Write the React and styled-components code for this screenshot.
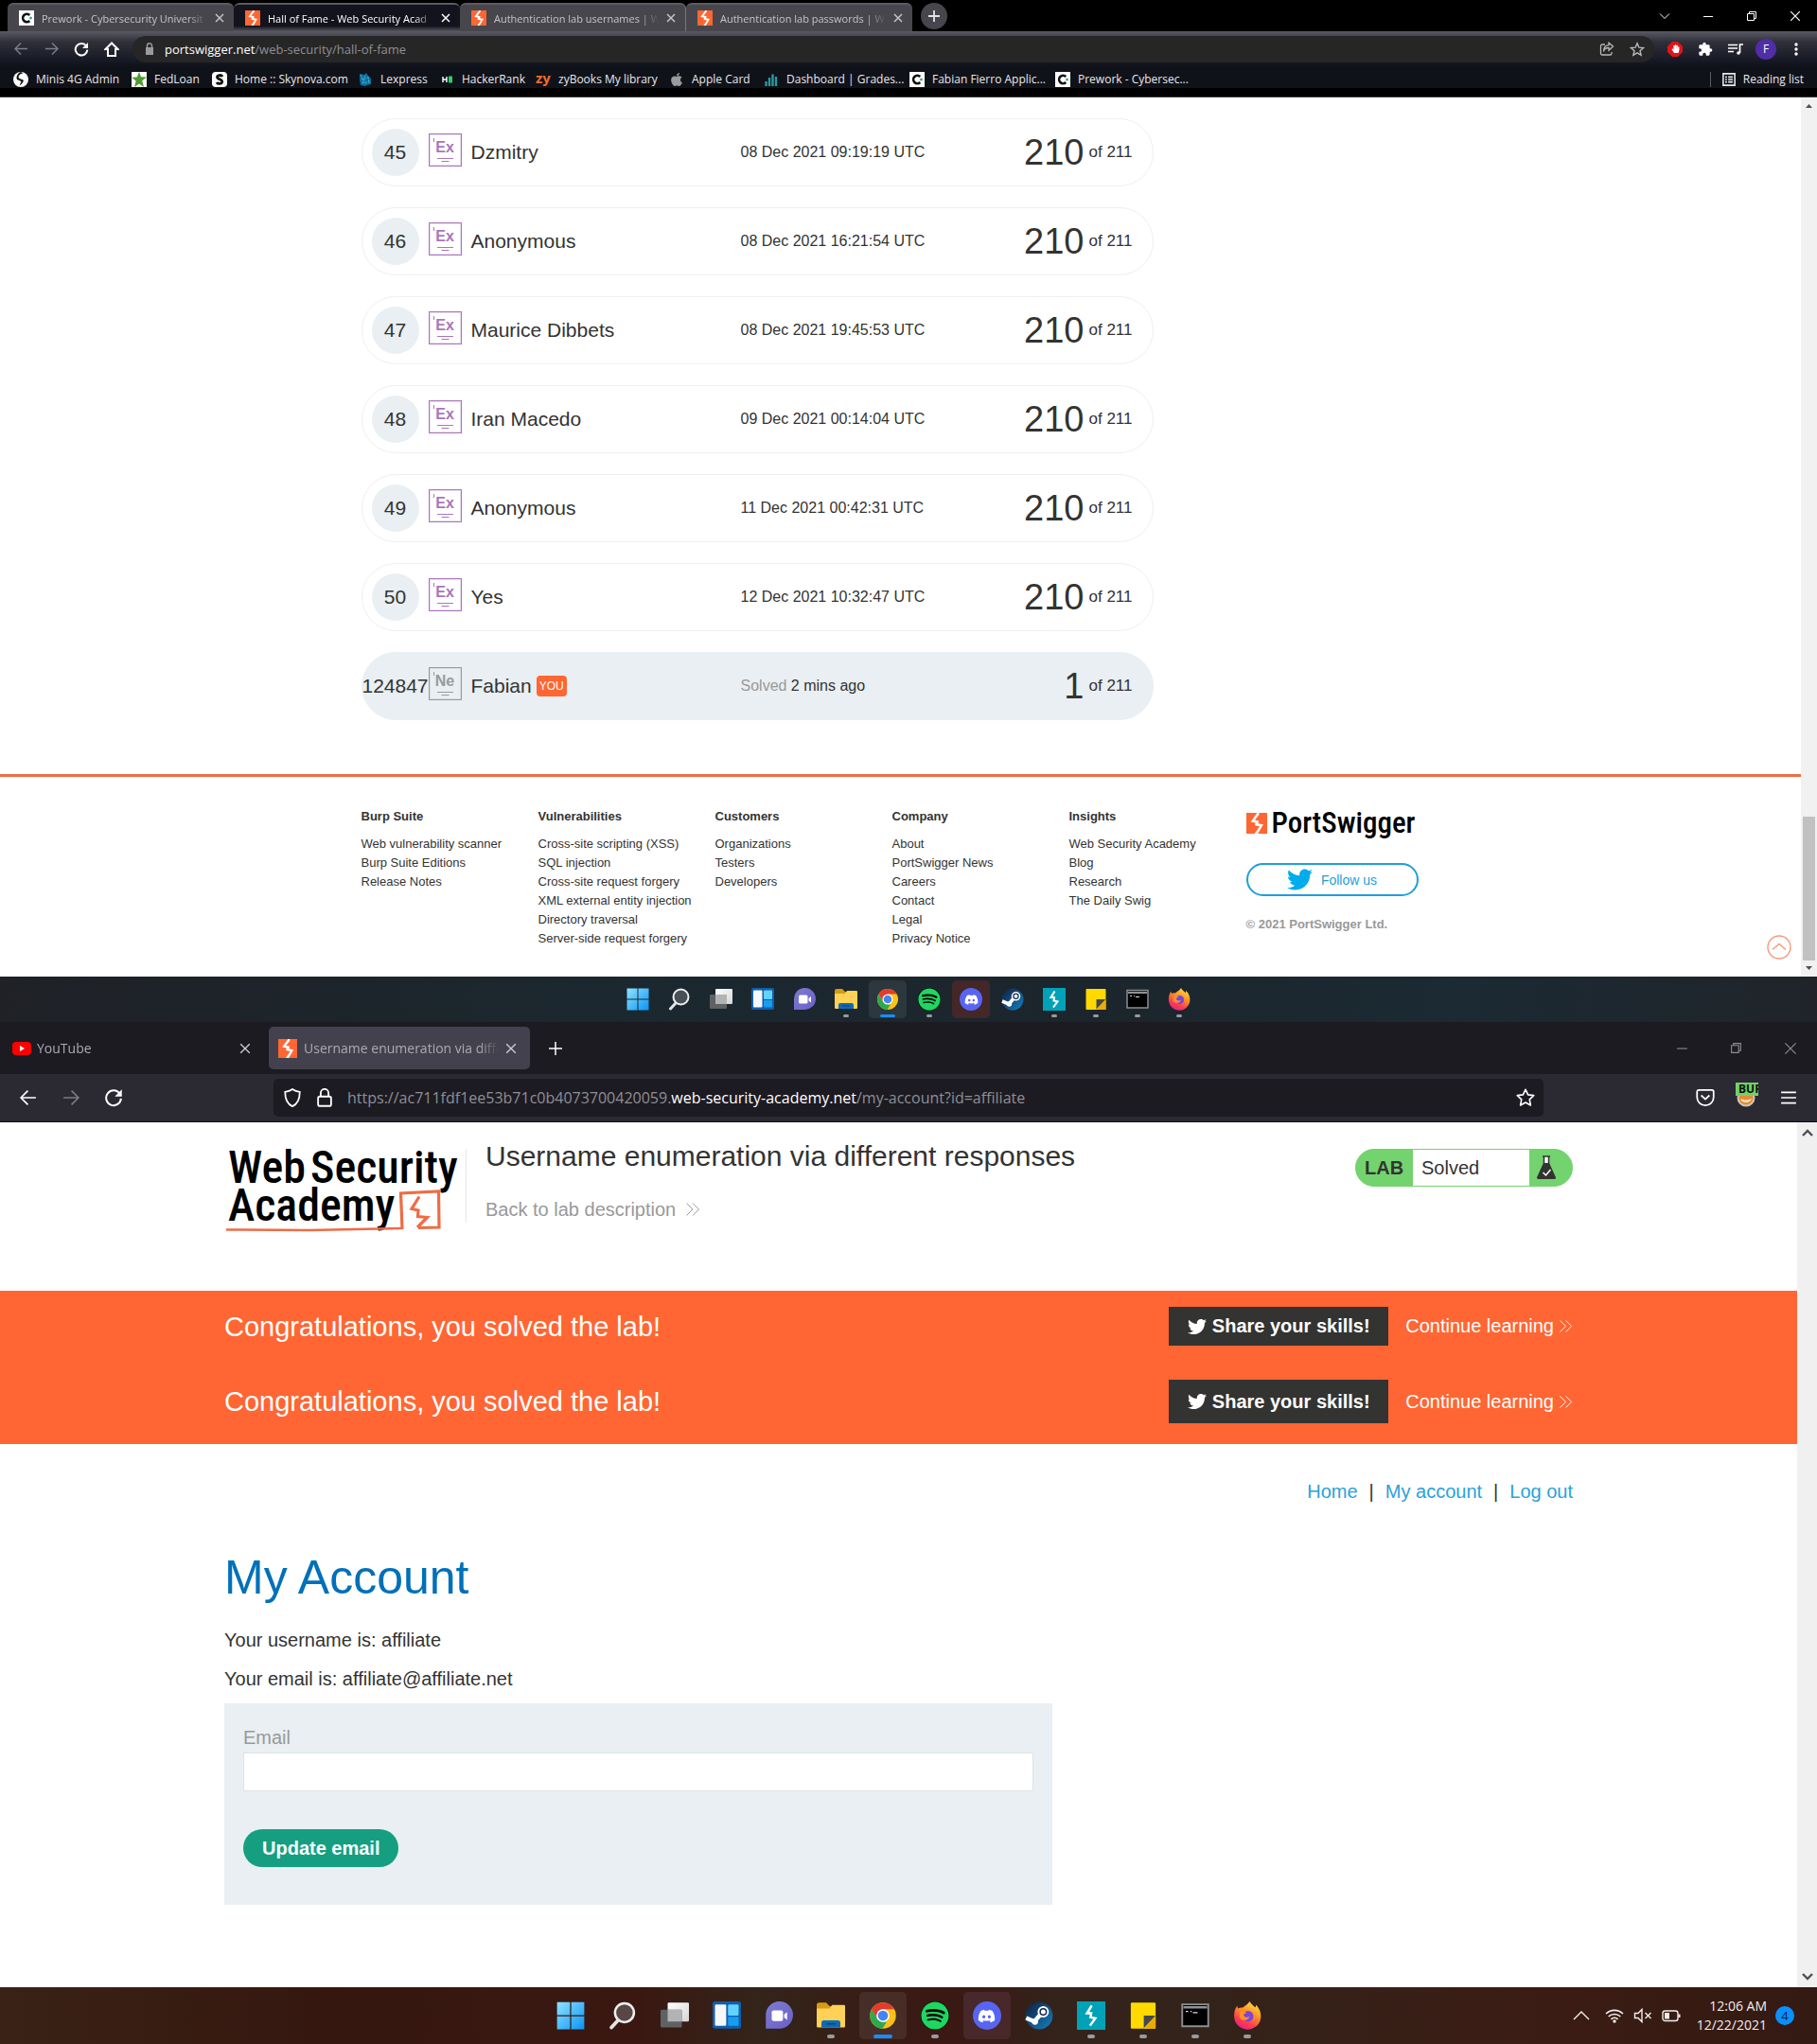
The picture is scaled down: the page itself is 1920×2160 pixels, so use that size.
import React from "react";
import styled, { createGlobalStyle, css } from "styled-components";
import { FaTwitter, FaApple, FaDiscord, FaSpotify, FaHandPaper, FaPuzzlePiece } from "react-icons/fa";

const UI = `"Segoe UI", "Open Sans", "Noto Sans", sans-serif`;
const SANS = `Arial, "Liberation Sans", sans-serif`;
const LOGO = `"Roboto Condensed", "Liberation Sans Narrow", Roboto, sans-serif`;

const Global = createGlobalStyle`
  *, *::before, *::after { box-sizing: border-box; }
  body { margin: 0; background: #fff; color: #333332; font-family: ${SANS}; }
  button, input { font: inherit; color: inherit; }
  button { background: none; border: 0; padding: 0; cursor: pointer; }
  a { color: inherit; text-decoration: none; }
  h1, h2, h3, p, ul, ol { margin: 0; padding: 0; }
  ul, ol { list-style: none; }
  svg { display: block; flex: none; }
`;

/* ---------- shared drawings ---------- */

const Stroke = ({ size = 16, w = 1, box = 16, children, ...rest }) => (
  <svg width={size} height={size} viewBox={`0 0 ${box} ${box}`} fill="none" stroke="currentColor" strokeWidth={w} aria-hidden="true" {...rest}>
    {children}
  </svg>
);

const Close = ({ size = 10, w = 1.5 }) => (
  <Stroke size={size} box={10} w={w}><path d="M1 1 9 9M9 1 1 9" /></Stroke>
);
const Minimise = ({ size = 12, w = 1 }) => (
  <Stroke size={size} box={12} w={w}><path d="M1 6.5H11" /></Stroke>
);
const Restore = ({ size = 12, w = 1 }) => (
  <Stroke size={size} box={12} w={w}><path d="M1.5 3.5h7v7h-7zM3.5 3.5v-2h7v7h-2" /></Stroke>
);
const Arrow = ({ size = 16, flip, w = 1.6 }) => (
  <Stroke size={size} w={w}>
    <path d={flip ? "M1 8H15M8.5 1.5 15 8l-6.5 6.5" : "M15 8H1M7.5 1.5 1 8l6.5 6.5"} />
  </Stroke>
);
const Reload = ({ size = 16, w = 2 }) => (
  <Stroke size={size} w={w}>
    <path d="M13.2 4.6A6.3 6.3 0 1 0 14.3 8.7" />
    <path d="M15 1v6H9z" fill="currentColor" stroke="none" />
  </Stroke>
);
const Chevrons = ({ size = 16 }) => (
  <Stroke size={size} w={1}><path d="M1.5 1.5 8 8l-6.5 6.5M8 1.5 14.5 8 8 14.5" /></Stroke>
);
const Bolt = ({ width = 16, height = 16, bg = "#ff6633" }) => (
  <svg width={width} height={height} viewBox="0 0 24 24" preserveAspectRatio="none" aria-hidden="true">
    <path fill={bg} d="M0 0h24v24H0z" />
    <path fill="#fff" d="M14.5 0 12.5 0 5 10.3l5.5 1.200L9.800 14.500 15.300 15.600 9.500 24h3.800L19.500 13.400 13.600 12.200 14.500 9.300 9.800 8.300 14.800 2z" />
  </svg>
);
const CyberC = () => (
  <svg width="16" height="16" viewBox="0 0 16 16" aria-hidden="true">
    <path fill="#fff" d="M0 0h16v16H0z" />
    <path d="M11.3 5A4.2 4.2 0 1 0 11.3 11" fill="none" stroke="#111" strokeWidth="2.6" />
    <circle cx="12.5" cy="8" r="1.5" fill="#3fae8c" />
  </svg>
);

/* ---------- Chrome window ---------- */

const ChromeFrame = styled.header`
  font-family: ${UI};
  background: #000;
  color: #e8e8ea;
  font-size: 12px;
  padding-bottom: 9px;
  border-bottom: 1px solid #3a3a3d;
`;
const ChromeStrip = styled.div`
  display: flex;
  align-items: flex-end;
  height: 33px;
  padding-left: 8px;
`;
const ChromeTab = styled.div`
  display: flex;
  align-items: center;
  gap: 8px;
  width: 239px;
  height: 30px;
  padding: 0 10px 0 12px;
  border-top: 2px solid #5c5b62;
  border-radius: 6px 6px 0 0;
  background: ${(p) => (p.$active ? "linear-gradient(#12131d 0 80%, #55555d)" : "#47464d")};
  color: ${(p) => (p.$active ? "#fff" : "#c4c4c8")};
  border-right: ${(p) => (p.$divider ? "1px solid #77767d" : "0")};
  font-size: 11px;
`;
const FadeText = styled.span`
  flex: 1;
  min-width: 0;
  overflow: hidden;
  white-space: nowrap;
  mask-image: linear-gradient(90deg, #000 calc(100% - 20px), transparent);
`;
const NewTab = styled.button`
  display: grid;
  place-items: center;
  width: 28px;
  height: 28px;
  margin: 0 0 2px 9px;
  border-radius: 50%;
  background: #47464d;
  color: #e4e4e6;
`;
const WindowButtons = styled.div`
  display: flex;
  align-items: center;
  gap: ${(p) => p.$gap}px;
  margin-left: auto;
  padding-right: ${(p) => p.$right}px;
  color: ${(p) => p.$color};
  align-self: center;
`;
const ChromeBar = styled.div`
  display: flex;
  align-items: center;
  height: 37px;
  padding: 0 14px;
  background: linear-gradient(#5a5a64, #30303a 30%, #161824 85%, #10121a);
`;
const ToolRow = styled.div`
  display: flex;
  align-items: center;
  gap: ${(p) => p.$gap}px;
`;
const IconButton = styled.button`
  display: grid;
  place-items: center;
  width: ${(p) => p.$size || 16}px;
  height: ${(p) => p.$size || 16}px;
  color: ${(p) => p.$color || "#fff"};
`;
const Omnibox = styled.div`
  display: flex;
  align-items: center;
  flex: 1;
  gap: 8px;
  height: 28px;
  margin: 0 14px;
  padding: 0 10px;
  border-radius: 14px;
  background: #262626;
  color: #b9b9b9;
`;
const Address = styled.span`
  flex: 1;
  white-space: nowrap;
  overflow: hidden;
  outline: 0;
  font-size: ${(p) => p.$size}px;
  color: #8f8f94;
  b { font-weight: 400; color: #fff; }
`;
const Avatar = styled.button`
  width: 22px;
  height: 22px;
  margin: 0 -3px;
  border-radius: 50%;
  background: #512da8;
  color: #fff;
  font-size: 12px;
`;
const Bookmarks = styled.nav`
  display: flex;
  align-items: center;
  height: 23px;
  padding: 4px 14px 0;
  background: #10121a;
`;
const Bookmark = styled.a`
  display: flex;
  align-items: center;
  flex: none;
  gap: 8px;
  width: ${(p) => p.$width}px;
  white-space: nowrap;
`;
const ReadingList = styled.button`
  display: flex;
  align-items: center;
  gap: 8px;
  height: 16px;
  margin-left: auto;
  padding-left: 12px;
  border-left: 1px solid #5c5c62;
`;

const chromeTabs = [
  { title: "Prework - Cybersecurity Universit", icon: <CyberC /> },
  { title: "Hall of Fame - Web Security Acad", icon: <Bolt />, active: true },
  { title: "Authentication lab usernames | W", icon: <Bolt />, divider: true },
  { title: "Authentication lab passwords | W", icon: <Bolt /> },
];

const Disc = ({ glyph, round }) => (
  <svg width="16" height="16" viewBox="0 0 16 16" aria-hidden="true">
    <rect width="16" height="16" rx={round} fill="#fff" />
    {glyph}
  </svg>
);
const SGlyph = ({ w = 2.4 }) => (
  <path d="M11 5C10 3 6 3 5.5 5.2 5.2 8 11 7.5 10.7 10.5 10.3 13 6 13 5 11" fill="none" stroke="#111" strokeWidth={w} />
);

const ZyMark = styled.span`
  width: 16px;
  height: 20px;
  font-size: 15px;
  line-height: 16px;
  font-weight: 700;
  color: #f26a2a;
`;

const bookmarks = [
  { label: "Minis 4G Admin", width: 125, icon: <Disc round={8} glyph={<path d="M10.500 1.500C6 2 4.500 5 6.500 7l4 1.500c1 1.500-1 4-4 6l2-4.500L4 8C2.500 5 5 1 8 0z" fill="#111" />} /> },
  { label: "FedLoan", width: 85, icon: <Disc round={0} glyph={<path d="m8 0 2 5.3 6 .2-4.8 3.700L13 16l-5-3.500L3 16l1.600-6.500L0 5.800l5.800-.3z" fill="#4f9a32" />} /> },
  { label: "Home :: Skynova.com", width: 154, icon: <Disc round={4} glyph={<SGlyph w={2.8} />} /> },
  { label: "Lexpress", width: 86, icon: (
    <svg width="16" height="16" viewBox="0 0 16 16" aria-hidden="true">
      <path d="M2 2 7 3 9 1l2 3 3 3v6l-4 1-2 1-5-1-1-5z" fill="#116c96" />
      <path d="M3 3l6 10M4 8l8-2M5 12l8-2M8 4l-3 8M11 5l1 7" stroke="#2fb0dd" fill="none" strokeDasharray="2 1" />
    </svg>) },
  { label: "HackerRank", width: 102, icon: (
    <svg width="16" height="16" viewBox="0 0 16 16" aria-hidden="true">
      <path d="M4 5v6M8 5v6M4 8h4" stroke="#fff" strokeWidth="1.4" /><path d="M10 4.500h4v7h-4z" fill="#1fd662" />
    </svg>) },
  { label: "zyBooks My library", width: 141, icon: <ZyMark>zy</ZyMark> },
  { label: "Apple Card", width: 100, icon: <FaApple size={16} color="#9b9b9e" /> },
  { label: "Dashboard | Grades...", width: 154, icon: (
    <svg width="16" height="16" viewBox="0 0 16 16" aria-hidden="true">
      <path d="M2.500 10v5M6 6v9M9.500 2.500V15M13 5v10" stroke="#2a9a9d" strokeWidth="2.4" />
    </svg>) },
  { label: "Fabian Fierro Applic...", width: 154, icon: <CyberC /> },
  { label: "Prework - Cybersec...", width: 140, icon: <CyberC /> },
];

function ChromeHeader() {
  return (
    <ChromeFrame>
      <ChromeStrip>
        {chromeTabs.map((t) => (
          <ChromeTab key={t.title} $active={t.active} $divider={t.divider}>
            {t.icon}
            <FadeText>{t.title}</FadeText>
            <IconButton $size={10} $color="inherit" aria-label={`Close ${t.title}`}><Close /></IconButton>
          </ChromeTab>
        ))}
        <NewTab aria-label="New tab"><Stroke size={12} box={12} w={1.8}><path d="M6 0v12M0 6h12" /></Stroke></NewTab>
        <WindowButtons $gap={34} $right={17} $color="#fff">
          <IconButton $size={12} aria-label="Search tabs"><Stroke size={12} box={12}><path d="M1 3.500 6 8.500 11 3.500" /></Stroke></IconButton>
          <IconButton $size={12} aria-label="Minimise"><Minimise /></IconButton>
          <IconButton $size={12} aria-label="Restore"><Restore /></IconButton>
          <IconButton $size={12} aria-label="Close window"><Close size={12} w={1} /></IconButton>
        </WindowButtons>
      </ChromeStrip>
      <ChromeBar>
        <ToolRow $gap={16}>
          <IconButton $color="#7d7e86" aria-label="Back"><Arrow size={15} /></IconButton>
          <IconButton $color="#7d7e86" aria-label="Forward"><Arrow size={15} flip /></IconButton>
          <IconButton aria-label="Reload"><Reload /></IconButton>
          <IconButton aria-label="Home"><Stroke w={2}><path d="M8 1.500 1.500 8H4v7h8V8h2.500z" /></Stroke></IconButton>
        </ToolRow>
        <Omnibox>
          <svg width="16" height="16" viewBox="0 0 16 16" aria-hidden="true">
            <path d="M4 6h8v8H4z" fill="#9a9a9e" /><path d="M5.500 7V4.300a2.500 2.500 0 0 1 5 0V7" fill="none" stroke="#9a9a9e" strokeWidth="1.5" />
          </svg>
          <Address $size={13} role="textbox" aria-label="Address" tabIndex={0}><b>portswigger.net</b>/web-security/hall-of-fame</Address>
          <ToolRow $gap={16}>
            <IconButton $color="inherit" aria-label="Share"><Stroke w={1.3}><path d="M6 3H3a1.500 1.500 0 0 0-1.500 1.500v8A1.500 1.500 0 0 0 3 14h8.500a1.500 1.500 0 0 0 1.500-1.500V11M4.500 10.500C5 7 7 6.500 10 6.500v2.700L14.500 5 10 1.200V3.700C6.500 4 4.500 6 4.500 10.500z" /></Stroke></IconButton>
            <IconButton $color="inherit" aria-label="Bookmark"><Stroke w={1.4}><path d="m8 1.800 1.900 4.400 4.700.4-3.600 3.100 1.100 4.600L8 11.800l-4.100 2.500L5 9.700 1.400 6.600l4.700-.4z" /></Stroke></IconButton>
          </ToolRow>
        </Omnibox>
        <ToolRow $gap={16}>
          <IconButton aria-label="Ad blocker">
            <svg width="16" height="16" viewBox="0 0 16 16" aria-hidden="true">
              <path d="M5 0h6l5 5v6l-5 5H5l-5-5V5z" fill="#e1141b" />
              <g transform="translate(4 3)"><FaHandPaper size={9} color="#fff" /></g>
            </svg>
          </IconButton>
          <IconButton aria-label="Extensions">
            <svg width="16" height="16" viewBox="0 0 24 24" fill="#fff" aria-hidden="true"><path d="M20.500 11H19V7a2 2 0 0 0-2-2h-4V3.500a2.500 2.500 0 0 0-5 0V5H4a2 2 0 0 0-2 2v3.800h1.500a2.700 2.700 0 0 1 0 5.400H2V20a2 2 0 0 0 2 2h3.800v-1.500a2.700 2.700 0 0 1 5.400 0V22H17a2 2 0 0 0 2-2v-4h1.500a2.500 2.500 0 0 0 0-5z" /></svg>
          </IconButton>
          <IconButton aria-label="Media"><Stroke w={1.7}><path d="M0 3.500h10M0 7h10M0 10.500h6M12.500 12V3H16" /><circle cx="11" cy="12" r="1.8" fill="currentColor" stroke="none" /></Stroke></IconButton>
          <Avatar aria-label="Profile">F</Avatar>
          <IconButton aria-label="Menu"><svg width="16" height="16" viewBox="0 0 16 16" fill="#fff" aria-hidden="true"><circle cx="8" cy="3" r="1.7" /><circle cx="8" cy="8" r="1.7" /><circle cx="8" cy="13" r="1.7" /></svg></IconButton>
        </ToolRow>
      </ChromeBar>
      <Bookmarks aria-label="Bookmarks">
        {bookmarks.map((b) => (
          <Bookmark key={b.label} href="#" $width={b.width}>{b.icon}{b.label}</Bookmark>
        ))}
        <ReadingList>
          <Stroke size={14} w={1.8}><path d="M1 1h14v14H1zM3.500 5h2M3.500 8h2M3.500 11h2M7 5h5.500M7 8h5.500M7 11h5.500" /></Stroke>
          Reading list
        </ReadingList>
      </Bookmarks>
    </ChromeFrame>
  );
}

/* ---------- scrollable page frame ---------- */

const Viewport = styled.div`
  display: flex;
  align-items: stretch;
`;
const Page = styled.main`
  flex: 1;
  min-width: 0;
  position: relative;
`;
const Track = styled.div`
  display: flex;
  flex-direction: column;
  justify-content: space-between;
  align-items: center;
  flex: none;
  width: ${(p) => p.$width}px;
  padding: ${(p) => p.$pad}px 0;
  background: ${(p) => p.$bg};
  color: #505050;
`;
const Thumb = styled.div`
  width: 13px;
  height: 152px;
  margin: auto 0 6px;
  background: #c1c1c1;
`;

/* ---------- Hall of fame ---------- */

const Container = styled.div`
  width: 100%;
  max-width: ${(p) => p.$max}px;
  margin: 0 auto;
`;
const RankList = styled.ol`
  display: grid;
  gap: 22px;
  max-width: 837px;
  padding: 22px 0 57px;
`;
const RankRow = styled.li`
  display: grid;
  grid-template-columns: 50px 35px 1fr 288px 116px;
  column-gap: 10px;
  align-items: center;
  height: 72px;
  padding: 0 21px 0 10px;
  border: 1px solid ${(p) => (p.$you ? "#e9eff2" : "#efefef")};
  border-radius: 36px;
  background: ${(p) => (p.$you ? "#e9eff2" : "#fff")};
`;
const Rank = styled.span`
  display: flex;
  align-items: center;
  justify-content: center;
  width: 50px;
  height: 50px;
  border-radius: 50%;
  background: #e9eff2;
  font-size: 21px;
`;
const Badge = styled.span`
  position: relative;
  display: flex;
  flex-direction: column;
  align-items: center;
  gap: 2px;
  height: 35px;
  margin-bottom: 6px;
  padding-top: 5px;
  border: 1px solid currentColor;
  box-shadow: inset 0 0 0 1px ${(p) => (p.$you ? "#d9dee0" : "#eadcf0")};
  color: ${(p) => (p.$you ? "#969b9d" : "#a976b9")};
  font-size: 16px;
  line-height: 18px;
  font-weight: 700;
  &::before {
    content: "";
    position: absolute;
    left: 4px;
    top: 4px;
    width: 1px;
    height: 4px;
    background: currentColor;
  }
`;
const Name = styled.span`
  display: flex;
  align-items: center;
  gap: 5px;
  font-size: 21px;
`;
const You = styled.span`
  padding: 0 3px;
  border-radius: 4px;
  background: #ff6633;
  color: #fff;
  font-size: 12px;
  line-height: 22px;
`;
const When = styled.span`
  font-size: 16px;
  em { font-style: normal; color: #999; }
`;
const Score = styled.span`
  display: flex;
  align-items: center;
  justify-content: flex-end;
  gap: 5px;
  font-size: 17px;
  strong { font-size: 38px; line-height: 44px; font-weight: 400; }
`;

const ranks = [
  ["45", "Dzmitry", "08 Dec 2021 09:19:19 UTC"],
  ["46", "Anonymous", "08 Dec 2021 16:21:54 UTC"],
  ["47", "Maurice Dibbets", "08 Dec 2021 19:45:53 UTC"],
  ["48", "Iran Macedo", "09 Dec 2021 00:14:04 UTC"],
  ["49", "Anonymous", "11 Dec 2021 00:42:31 UTC"],
  ["50", "Yes", "12 Dec 2021 10:32:47 UTC"],
];
const BadgeLines = () => (
  <svg width="17" height="5" viewBox="0 0 17 5" stroke="currentColor" aria-hidden="true"><path d="M0 .5h17M4.500 3.500h8" /></svg>
);

function HallOfFame() {
  return (
    <Container $max={1140}>
      <RankList>
        {ranks.map(([n, name, when]) => (
          <RankRow key={n}>
            <Rank>{n}</Rank>
            <Badge>Ex<BadgeLines /></Badge>
            <Name>{name}</Name>
            <When>{when}</When>
            <Score><strong>210</strong>of 211</Score>
          </RankRow>
        ))}
        <RankRow $you>
          <Rank>124847</Rank>
          <Badge $you>Ne<BadgeLines /></Badge>
          <Name>Fabian<You>YOU</You></Name>
          <When><em>Solved</em> 2 mins ago</When>
          <Score><strong>1</strong>of 211</Score>
        </RankRow>
      </RankList>
    </Container>
  );
}

const Footer = styled.footer`
  border-top: 3px solid #ee6c45;
  padding: 32px 0 30px;
  font-size: 13px;
  line-height: 20px;
`;
const FooterGrid = styled.div`
  display: grid;
  grid-template-columns: repeat(5, 187px) 182px;
  h3 { font-size: 13px; line-height: 20px; font-weight: 700; margin-bottom: 9px; }
  li { white-space: nowrap; }
`;
const Brand = styled.div`
  display: flex;
  align-items: center;
  gap: 5px;
  height: 34px;
  margin-bottom: 25px;
  color: #000;
  font-family: ${LOGO};
  font-size: 31px;
  line-height: 34px;
  font-weight: 500;
`;
const Follow = styled.button`
  display: flex;
  align-items: center;
  justify-content: center;
  gap: 9px;
  width: 182px;
  height: 35px;
  margin-bottom: 20px;
  border: 2px solid #1e9fdb;
  border-radius: 18px;
  color: #1e9fdb;
  font-size: 14px;
`;
const Copyright = styled.p`
  color: #999;
  font-weight: 700;
`;
const ToTop = styled.button`
  position: absolute;
  right: 10px;
  bottom: 18px;
  color: #f79a7c;
`;

const footerColumns = [
  ["Burp Suite", ["Web vulnerability scanner", "Burp Suite Editions", "Release Notes"]],
  ["Vulnerabilities", ["Cross-site scripting (XSS)", "SQL injection", "Cross-site request forgery", "XML external entity injection", "Directory traversal", "Server-side request forgery"]],
  ["Customers", ["Organizations", "Testers", "Developers"]],
  ["Company", ["About", "PortSwigger News", "Careers", "Contact", "Legal", "Privacy Notice"]],
  ["Insights", ["Web Security Academy", "Blog", "Research", "The Daily Swig"]],
];

function SiteFooter() {
  return (
    <Footer>
      <Container $max={1140}>
        <FooterGrid>
          {footerColumns.map(([title, links]) => (
            <div key={title}>
              <h3>{title}</h3>
              <ul>{links.map((l) => <li key={l}><a href="#">{l}</a></li>)}</ul>
            </div>
          ))}
          <div>
            <Brand><Bolt width={22} height={22} />PortSwigger</Brand>
            <Follow><FaTwitter size={27} color="#00aced" />Follow us</Follow>
            <Copyright>© 2021 PortSwigger Ltd.</Copyright>
          </div>
        </FooterGrid>
      </Container>
      <ToTop aria-label="Back to top">
        <Stroke size={26} box={26} w={1.4}><circle cx="13" cy="13" r="12" /><path d="M6 15.500 13 9.500l7 6" /></Stroke>
      </ToTop>
    </Footer>
  );
}

/* ---------- Taskbar ---------- */

const Bar = styled.footer`
  display: grid;
  grid-template-columns: 1fr auto 1fr;
  align-items: center;
  height: ${(p) => (p.$large ? 60 : 48)}px;
  background: ${(p) => (p.$large
    ? "linear-gradient(90deg, #3a2216, #35170f 18%, #3a1811 35%, #33241a 42%, #3b1813 52%, #33231a 58%, #33231a 66%, #3b1c14 85%, #331a12)"
    : "linear-gradient(90deg, #1f2126, #1b2830 35%, #1c252c 60%, #1b2a33 80%, #20242a)")};
  color: #f2eeec;
`;
const Apps = styled.div`
  display: flex;
  gap: ${(p) => (p.$large ? 5 : 4)}px;
`;
const AppButton = styled.button`
  position: relative;
  display: grid;
  place-items: center;
  width: ${(p) => (p.$large ? 50 : 40)}px;
  height: ${(p) => (p.$large ? 50 : 40)}px;
  border-radius: 5px;
  ${(p) => p.$tint && css`background: ${p.$tint};`}
  ${(p) => p.$running && css`
    &::after {
      content: "";
      position: absolute;
      bottom: 1px;
      left: 50%;
      width: ${p.$focus ? (p.$large ? 20 : 16) : (p.$large ? 8 : 6)}px;
      height: ${p.$large ? 4 : 3}px;
      translate: -50% 0;
      border-radius: 2px;
      background: ${p.$focus ? "#188ef5" : "#989c9e"};
    }
  `}
`;
const Tray = styled.div`
  display: flex;
  align-items: center;
  justify-content: flex-end;
  gap: 9px;
  padding-right: 24px;
  font-family: ${UI};
  font-size: 14px;
  line-height: 20px;
  text-align: right;
`;
const TrayIcons = styled.div`
  display: flex;
  align-items: center;
  gap: 10px;
  margin-right: 8px;
  svg:first-child { margin-right: 5px; }
`;
const Count = styled.span`
  width: 20px;
  border-radius: 50%;
  background: #0a90ff;
  color: #10263c;
  font-size: 13px;
  text-align: center;
`;

const art = {
  start: <><defs><linearGradient id="win" x2="1" y2="1"><stop stopColor="#8fe4ff" /><stop offset="1" stopColor="#0a93f5" /></linearGradient></defs><path fill="url(#win)" d="M.5.5h11v11H.5zM12.500.5h11v11h-11zM.5 12.500h11v11H.5zM12.500 12.500h11v11h-11z" /></>,
  search: <><circle cx="13.500" cy="9.500" r="8" fill="#8a8f93" fillOpacity=".4" stroke="#f0f0f0" strokeWidth="2" /><path d="M8 16 2.500 22" stroke="#e4e4e4" strokeWidth="3" strokeLinecap="round" /></>,
  tasks: <><defs><linearGradient id="tv" y2="1"><stop stopColor="#fff" /><stop offset="1" stopColor="#d6d6d6" /></linearGradient></defs><rect x="6" y="1" width="18" height="16" rx="1" fill="url(#tv)" /><rect y="7" width="18" height="15" rx="1" fill="#5f6163" /><path d="M6 7h12v10H6z" fill="#b2b3b4" /></>,
  widgets: <><rect y="0" width="24" height="23" rx="2" fill="#0f5fae" /><rect x="2" y="2.500" width="9.500" height="18" rx="1" fill="#f5f8fb" /><rect x="13" y="2.500" width="9" height="9.500" rx="1" fill="#62d3ff" /><rect x="13" y="13" width="9" height="7.500" rx="1" fill="#159ef0" /></>,
  chat: <><defs><linearGradient id="ch" y2="1"><stop stopColor="#7d7bd2" /><stop offset="1" stopColor="#6a5fc8" /></linearGradient></defs><path d="M1 23V12A11.500 11.500 0 1 1 12 23z" fill="url(#ch)" /><rect x="6" y="7.500" width="9.500" height="9" rx="1.500" fill="#fff" /><path d="m16.500 11 2.500-2v6.500l-2.500-2z" fill="#fff" /></>,
  files: <><path d="M0 3a2 2 0 0 1 2-2h6l3 3h9v5H0z" fill="#d79a12" /><path d="M0 6h11l2-3h10a1 1 0 0 1 1 1v17a1 1 0 0 1-1 1H1a1 1 0 0 1-1-1z" fill="#ffd257" /><path d="M4 22v-4a2 2 0 0 1 2-2h12a2 2 0 0 1 2 2v4z" fill="#0c6bb5" /><path d="M8 19h8" stroke="#083f74" /></>,
  chrome: <><circle cx="12" cy="12" r="11" fill="#fbc116" /><path d="M2.470 6.500A11 11 0 0 1 21.530 6.500L12 6.500 7.200 14.800z" fill="#e33b2e" /><path d="M2.470 6.500 7.200 14.800 12 17.500h3L11.500 23A11 11 0 0 1 2.470 6.500z" fill="#2da94f" /><circle cx="12" cy="12" r="5.500" fill="#fff" /><circle cx="12" cy="12" r="4.300" fill="#4285f4" /></>,
  steam: <><defs><linearGradient id="st" y2="1"><stop stopColor="#101b3b" /><stop offset="1" stopColor="#1483c4" /></linearGradient></defs><circle cx="12" cy="12" r="11.500" fill="url(#st)" /><path d="m1 14 7 3M8.500 16.500 14 10" stroke="#fff" strokeWidth="3.600" /><circle cx="8.500" cy="17" r="2.700" fill="#fff" /><circle cx="15.500" cy="8.800" r="4" stroke="#fff" strokeWidth="1.600" fill="#14284e" /><circle cx="15.500" cy="8.800" r="2" fill="#fff" /></>,
  burp: <><path d="M0 0h24v24H0z" fill="#00a2b8" /><path d="M12.500 3.500 8.500 10h3.500l-.5 3.500 4 .8-4.500 6.200" fill="none" stroke="#fff" strokeWidth="2" /></>,
  notes: <><rect x="1.500" y="1" width="21" height="22" rx="1" fill="#ffd900" /><path d="M12.500 12h10L12.500 22.500z" fill="#45474a" /><path d="M22.500 12v11h-10z" fill="#e8ac06" /></>,
  terminal: <><path d="M1 2.500h22v18.500H1z" fill="#000" stroke="#8d8f92" strokeWidth="1.500" /><path d="M2 5h20" stroke="#909294" strokeWidth="2" /><path d="M4 8.500h2M8 8.500h1M10 9.500h4" stroke="#ddd" /></>,
  firefox: <><defs><linearGradient id="ff" x1=".8" x2=".3" y2="1"><stop stopColor="#ffe14a" /><stop offset=".4" stopColor="#ff9626" /><stop offset=".75" stopColor="#ff3c4e" /><stop offset="1" stopColor="#e2208a" /></linearGradient></defs><path d="M14 0c1 2 3 3.500 4.500 5 .8-.3.800-1.300.6-2.300C22.500 6 24 10 23.300 14.500A11.300 11.300 0 0 1 1 14C.5 10 1.500 6 3.500 3.500c0 1 .3 2 .8 2.500 1-.8 2.400-1 4-.8C10 3.500 12.500 2.500 14 0z" fill="url(#ff)" /><circle cx="12.500" cy="12.500" r="4.600" fill="#7a45d8" /><path d="M5.500 9c2-1.500 4.500-.8 6 .8-2 .2-2.500 1-2.500 2.200 1 2 3.500 1.500 5 .5-1 4-6 4.500-8.500 1z" fill="#ff8f2b" /></>,
};
const Art = ({ name, size }) => <svg width={size} height={size} viewBox="0 0 24 24" fill="none" aria-hidden="true">{art[name]}</svg>;

const RoundLogo = styled.span`
  display: grid;
  place-items: center;
  width: ${(p) => p.$size}px;
  height: ${(p) => p.$size}px;
  border-radius: 50%;
  background: ${(p) => p.$bg};
  color: ${(p) => p.$fg};
`;

const apps = [
  { name: "Start", art: "start" },
  { name: "Search", art: "search" },
  { name: "Task view", art: "tasks" },
  { name: "Widgets", art: "widgets" },
  { name: "Chat", art: "chat" },
  { name: "File Explorer", art: "files", running: true },
  { name: "Chrome", art: "chrome", running: true, focus: true, tint: "rgba(255,255,255,.08)" },
  { name: "Spotify", Icon: FaSpotify, bg: "#000", fg: "#1ed760", running: true },
  { name: "Discord", Icon: FaDiscord, bg: "#5865f2", fg: "#fff", inner: 0.62, alert: true },
  { name: "Steam", art: "steam" },
  { name: "Burp Suite", art: "burp", running: true },
  { name: "Sticky Notes", art: "notes", running: true },
  { name: "Terminal", art: "terminal", running: true },
  { name: "Firefox", art: "firefox", running: true },
];

function Taskbar({ large }) {
  const s = large ? 30 : 24;
  return (
    <Bar $large={large}>
      <span />
      <Apps $large={large}>
        {apps.map((a) => (
          <AppButton
            key={a.name}
            aria-label={a.name}
            $large={large}
            $running={a.running}
            $focus={a.focus}
            $tint={a.alert ? (large ? "#48282a" : "#432729") : a.tint}
          >
            {a.art
              ? <Art name={a.art} size={s} />
              : <RoundLogo $size={s} $bg={a.bg} $fg={a.fg}><a.Icon size={Math.round(s * (a.inner || 1))} /></RoundLogo>}
          </AppButton>
        ))}
      </Apps>
      {large && (
        <Tray>
          <TrayIcons>
            <Stroke size={20} box={20} w={1.4}><path d="M2 14 10 6l8 8" /></Stroke>
            <Stroke size={20} box={20} w={1.6}><path d="M1 8a13 13 0 0 1 18 0M3.700 11a9 9 0 0 1 12.600 0M6.400 13.800a5.200 5.200 0 0 1 7.200 0" /><circle cx="10" cy="16" r="1.7" fill="currentColor" stroke="none" /></Stroke>
            <Stroke size={20} box={20} w={1.4}><path d="M1.500 7.500H5L9 3.500v13L5 12.500H1.500zM12.500 7l6 6M18.500 7l-6 6" /></Stroke>
            <Stroke size={20} box={20} w={1.4}><rect x="1" y="5" width="16" height="10.5" rx="2.5" /><path d="M3 7h5v6.500H3z" fill="currentColor" stroke="none" /><path d="M18.500 8.500v3.500" strokeWidth="2" /></Stroke>
          </TrayIcons>
          <div>12:06 AM<br />12/22/2021</div>
          <Count>4</Count>
        </Tray>
      )}
    </Bar>
  );
}

/* ---------- Firefox window ---------- */

const FoxFrame = styled.header`
  font-family: ${UI};
  background: #1c1b22;
  color: #fbfbfe;
  border-bottom: 1px solid #0c0c0d;
`;
const FoxStrip = styled.div`
  display: flex;
  align-items: center;
  height: 55px;
  gap: 4px;
`;
const FoxTab = styled.div`
  display: flex;
  align-items: center;
  gap: ${(p) => (p.$active ? 7 : 6)}px;
  width: ${(p) => (p.$active ? 276 : 280)}px;
  height: 45px;
  padding: ${(p) => (p.$active ? "0 14px 0 10px" : "0 15px 0 13px")};
  border-radius: 5px;
  background: ${(p) => (p.$active ? "#42414d" : "transparent")};
  color: #acabb1;
  font-size: 14px;
`;
const FoxBar = styled.div`
  display: flex;
  align-items: center;
  height: 50px;
  padding: 0 20px;
  background: #2b2a33;
`;
const UrlBar = styled.div`
  display: flex;
  align-items: center;
  flex: 1;
  gap: 14px;
  height: 40px;
  margin: 0 161px 0 159px;
  padding: 0 9px 0 10px;
  border-radius: 5px;
  background: #1c1b22;
`;
const ProxyIcon = styled.button`
  position: relative;
  width: 24px;
  height: 26px;
  margin-top: -6px;
  overflow: hidden;
  svg { position: absolute; left: 1px; top: 6px; }
  span { position: absolute; left: 0; top: 0; padding-left: 3px; width: 40px; background: #74cf6c; color: #061306; font-size: 12px; line-height: 14px; font-weight: 700; text-align: left; }
`;

function FirefoxHeader() {
  return (
    <FoxFrame>
      <FoxStrip>
        <FoxTab>
          <svg width="20" height="20" viewBox="0 0 20 20" aria-hidden="true"><rect y="3" width="20" height="14" rx="4" fill="#f00" /><path d="m8 7 5 3-5 3z" fill="#fff" /></svg>
          <FadeText>YouTube</FadeText>
          <IconButton $size={12} $color="#d0cfd4" aria-label="Close YouTube"><Close size={12} w={1.1} /></IconButton>
        </FoxTab>
        <FoxTab $active>
          <Bolt width={20} height={20} />
          <FadeText>Username enumeration via diffe</FadeText>
          <IconButton $size={12} $color="#d0cfd4" aria-label="Close tab"><Close size={12} w={1.1} /></IconButton>
        </FoxTab>
        <IconButton $size={46} aria-label="Open a new tab"><Stroke size={16} w={1.5}><path d="M8 1v14M1 8h14" /></Stroke></IconButton>
        <WindowButtons $gap={44} $right={22} $color="#8f8e94">
          <IconButton $size={13} $color="inherit" aria-label="Minimise"><Minimise size={13} /></IconButton>
          <IconButton $size={13} $color="inherit" aria-label="Restore"><Restore size={13} /></IconButton>
          <IconButton $size={13} $color="inherit" aria-label="Close window"><Close size={14} w={0.8} /></IconButton>
        </WindowButtons>
      </FoxStrip>
      <FoxBar>
        <ToolRow $gap={25}>
          <IconButton $size={20} aria-label="Back"><Arrow size={18} w={1.5} /></IconButton>
          <IconButton $size={20} $color="#7c7b83" aria-label="Forward"><Arrow size={18} flip w={1.5} /></IconButton>
          <IconButton $size={20} aria-label="Reload"><Reload size={20} w={1.6} /></IconButton>
        </ToolRow>
        <UrlBar>
          <Stroke size={20} w={1.4}><path d="M8 .8c2 1.400 4 2 6.200 2.300 0 6-1.700 10-6.200 12.200C3.500 13.100 1.800 9.100 1.800 3.100 4 2.800 6 2.200 8 .8z" /></Stroke>
          <Stroke size={20} w={1.5}><rect x="2.5" y="7" width="11" height="8" rx="1.5" /><path d="M4.700 7V4a3.300 3.300 0 0 1 6.600 0v3" /></Stroke>
          <Address $size={16} role="textbox" aria-label="Page address" tabIndex={0}>https://ac711fdf1ee53b71c0b4073700420059.<b>web-security-academy.net</b>/my-account?id=affiliate</Address>
          <IconButton $size={20} aria-label="Bookmark this page"><Stroke size={20} w={1.3}><path strokeLinejoin="round" d="m8 1 2.100 4.500 4.900.6-3.600 3.400.9 4.900L8 12l-4.300 2.400.9-4.900L1 6.100l4.900-.6z" /></Stroke></IconButton>
        </UrlBar>
        <ToolRow $gap={22}>
          <IconButton $size={20} aria-label="Save to Pocket"><Stroke size={20} w={1.4}><path d="M2.500 1.500h11A1.500 1.500 0 0 1 15 3v4.500a7 7 0 0 1-14 0V3a1.500 1.500 0 0 1 1.500-1.500zM4.500 6 8 9.300 11.500 6" /></Stroke></IconButton>
          <ProxyIcon aria-label="Proxy switcher">
            <svg width="20" height="20" viewBox="0 0 20 20" aria-hidden="true"><circle cx="10" cy="10" r="9.5" fill="#cfc6be" /><circle cx="10" cy="10" r="7.5" fill="#e88a2e" /><path d="M4 12c3-2 4 2 7 0 2 1 3-1 5-1-1 4-8 6-12 1z" fill="#f7e4cc" /></svg>
            <span>BUR</span>
          </ProxyIcon>
          <IconButton $size={20} aria-label="Application menu"><Stroke size={18} w={1.5}><path d="M1 3h14M1 8h14M1 13h14" /></Stroke></IconButton>
        </ToolRow>
      </FoxBar>
    </FoxFrame>
  );
}

/* ---------- Lab page ---------- */

const LabHeader = styled.div`
  display: flex;
  align-items: flex-start;
  padding-top: 28px;
  height: 178px;
`;
const AcademyLogo = styled.div`
  position: relative;
  width: 256px;
  height: 78px;
  padding-left: 4px;
  border-right: 1px solid #e6e6e6;
  color: #000;
  font-family: ${LOGO};
  font-size: 48px;
  line-height: 40px;
  font-weight: 500;
  white-space: nowrap;
  svg { position: absolute; left: 0; top: 40px; }
`;
const LogoLine = styled.div`
  display: flex;
  gap: 5px;
`;
const LabTitle = styled.div`
  flex: 1;
  padding-left: 20px;
  h2 { margin-top: -10px; font-size: 30px; line-height: 36px; font-weight: 400; }
  a { display: inline-flex; align-items: center; gap: 10px; margin-top: 26px; color: #999; font-size: 20px; line-height: 24px; }
`;
const LabStatus = styled.div`
  display: flex;
  align-items: center;
  width: 230px;
  height: 40px;
  border: 1px solid #73d36f;
  border-radius: 20px;
  background: #73d36f;
  font-size: 20px;
  strong { width: 60px; padding-left: 9px; }
  span { width: 123px; padding-left: 9px; line-height: 38px; background: #fff; }
  svg { margin-left: 7px; }
`;
const Banner = styled.section`
  background: #ff6633;
  color: #fff;
  padding: 17px 0 22px;
`;
const BannerRow = styled.div`
  display: flex;
  align-items: center;
  font-size: 20px;
  & + & { margin-top: 36px; }
  p { flex: 1; font-size: 29px; line-height: 34px; }
  a { display: flex; align-items: center; gap: 5px; margin-left: 18px; }
`;
const Share = styled.button`
  display: flex;
  align-items: center;
  justify-content: center;
  gap: 6px;
  width: 232px;
  height: ${(p) => p.$height}px;
  background: #333332;
  font-weight: 700;
`;
const AccountNav = styled.nav`
  display: flex;
  justify-content: flex-end;
  gap: 12px;
  padding: 38px 0 49px;
  font-size: 20px;
  line-height: 24px;
  a { color: #29a2db; }
`;
const AccountTitle = styled.h1`
  color: #0070b9;
  font-size: 50px;
  line-height: 60px;
  font-weight: 400;
  margin-bottom: 21px;
`;
const Line = styled.p`
  font-size: 20px;
  line-height: 30px;
  margin-bottom: 11px;
`;
const EmailForm = styled.form`
  display: flex;
  flex-direction: column;
  align-items: flex-start;
  width: 875px;
  max-width: 100%;
  margin-bottom: 87px;
  padding: 24px 20px 40px;
  background: #e9eff2;
  font-size: 20px;
  label { color: #999; line-height: 24px; margin-bottom: 4px; }
  input { width: 100%; height: 41px; border: 1px solid #dde3e5; background: #fff; padding: 0 8px; }
`;
const Update = styled.button`
  height: 40px;
  margin-top: 40px;
  padding: 0 20px;
  border-radius: 20px;
  background: #159f80;
  color: #fff;
  font-weight: 700;
`;

function LabPage() {
  return (
    <Page>
      <Container $max={1425}>
        <LabHeader>
          <AcademyLogo>
            <LogoLine><span>Web</span><span>Security</span></LogoLine>
            <LogoLine>Academy</LogoLine>
            <svg width="240" height="48" viewBox="0 0 240 48" fill="none" stroke="#ef6b45" strokeWidth="2.5" aria-hidden="true">
              <path d="M2 45.500 90 46 188 44" /><path strokeWidth="3.200" d="M188 45 186.500 7l40-2 .5 38-22 .5" /><path strokeWidth="3.200" d="M206 10.500 198 23.500l7 1.500-.5 6.500 10 1L204 43" />
            </svg>
          </AcademyLogo>
          <LabTitle>
            <h2>Username enumeration via different responses</h2>
            <a href="#">Back to lab description <Chevrons /></a>
          </LabTitle>
          <LabStatus>
            <strong>LAB</strong>
            <span>Solved</span>
            <svg width="22" height="26" viewBox="0 0 22 26" aria-hidden="true">
              <path d="M7 1h8M8.500 1v8L2 23.500h18L13.500 9V1" fill="#fff" stroke="#333332" strokeWidth="1.5" />
              <path d="M8 8h6l7 15.500-1 1.500H2l-1-1.500z" fill="#333332" /><path d="m7.500 18 3 3 5-6" fill="none" stroke="#fff" strokeWidth="1.5" />
            </svg>
          </LabStatus>
        </LabHeader>
      </Container>
      <Banner>
        <Container $max={1425}>
          {[41, 46].map((h) => (
            <BannerRow key={h}>
              <p>Congratulations, you solved the lab!</p>
              <Share $height={h}><FaTwitter size={20} />Share your skills!</Share>
              <a href="#">Continue learning <Chevrons size={15} /></a>
            </BannerRow>
          ))}
        </Container>
      </Banner>
      <Container $max={1425}>
        <AccountNav>
          <a href="#">Home</a>|<a href="#">My account</a>|<a href="#">Log out</a>
        </AccountNav>
        <AccountTitle>My Account</AccountTitle>
        <Line>Your username is: affiliate</Line>
        <Line>Your email is: affiliate@affiliate.net</Line>
        <EmailForm onSubmit={(e) => e.preventDefault()}>
          <label htmlFor="email">Email</label>
          <input id="email" type="email" />
          <Update type="submit">Update email</Update>
        </EmailForm>
      </Container>
    </Page>
  );
}

const SolidArrow = ({ up }) => (
  <svg width="7" height="4" viewBox="0 0 7 4" fill="#505050" aria-hidden="true"><path d={up ? "M0 4 3.500 0 7 4z" : "M0 0h7L3.500 4z"} /></svg>
);
const OpenArrow = ({ up }) => (
  <Stroke size={12} box={12} w={2.4}><path d={up ? "M1 9 6 4l5 5" : "M1 3l5 5 5-5"} /></Stroke>
);

export default function App() {
  return (
    <>
      <Global />
      <ChromeHeader />
      <Viewport>
        <Page>
          <HallOfFame />
          <SiteFooter />
        </Page>
        <Track $width={17} $pad={7} $bg="#f1f1f1" aria-hidden="true"><SolidArrow up /><Thumb /><SolidArrow /></Track>
      </Viewport>
      <Taskbar />
      <FirefoxHeader />
      <Viewport>
        <LabPage />
        <Track $width={21} $pad={5} $bg="#f0f0f0" aria-hidden="true"><OpenArrow up /><OpenArrow /></Track>
      </Viewport>
      <Taskbar large />
    </>
  );
}
